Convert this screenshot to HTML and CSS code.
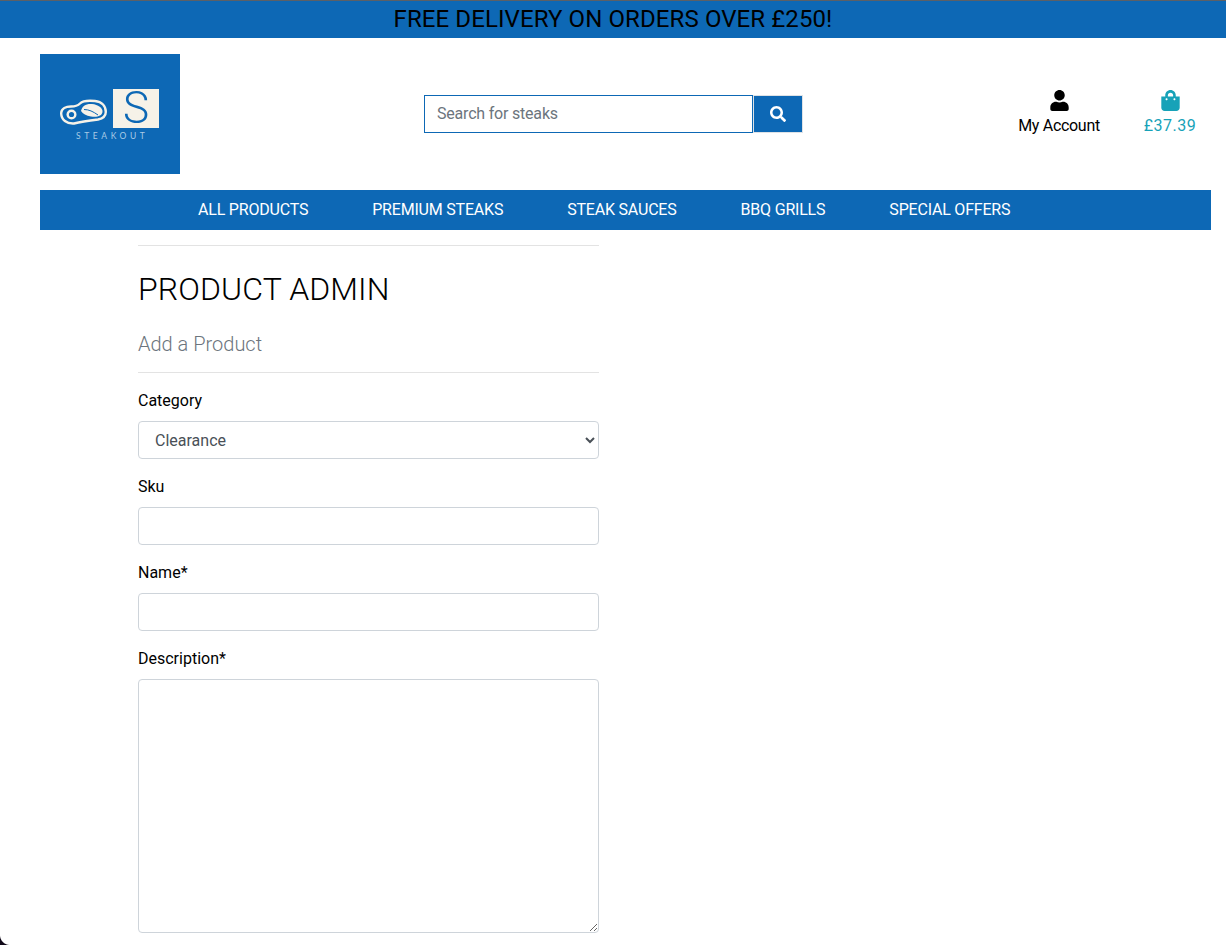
FILE: index.html
```html
<!DOCTYPE html>
<html lang="en">
<head>
    <meta charset="UTF-8">
    <meta name="viewport" content="width=device-width, initial-scale=1.0">
    <title>Steakout - Product Admin</title>
    <link rel="stylesheet" href="styles.css">
</head>
<body>

<div class="banner">FREE DELIVERY ON ORDERS OVER £250!</div>

<header class="top">
    <a class="logo" href="#">
        <span class="logo-row">
            <svg class="logo-meat" viewBox="0 0 47 26" aria-hidden="true">
                <path d="M1.2 14C1.5 9.5 6 7.5 11 7.5C15 7.5 18 6.5 20 4.5C23 1.5 27 1.2 35 2C42 2.7 45.8 7 45.8 13C45.8 17.5 43 19.5 38 20.5C30 21.5 22 22.5 14 24.5C7 25 1 21 1.2 14Z" fill="#0d68b5" stroke="#f6f2e8" stroke-width="2.4"/>
                <path d="M21 12C22 7 26 4.5 32 5C38 5.5 43 9 42.5 13C42 17 37 18.5 31 17.5C26 16.5 23 15 21 12Z" fill="#f6f2e8"/>
                <path d="M24 10.5C29 10.5 33 12.5 38 16" stroke="#0d68b5" stroke-width="1" fill="none"/>
                <circle cx="11.5" cy="15.5" r="5" fill="#f6f2e8"/>
                <circle cx="11.5" cy="15.5" r="2.6" fill="#0d68b5"/>
            </svg>
            <span class="logo-s">S</span>
        </span>
        <span class="logo-name">STEAKOUT</span>
    </a>

    <form class="search">
        <input class="search-input" type="text" placeholder="Search for steaks">
        <button class="search-btn" type="button">
            <svg viewBox="0 0 512 512" width="16" height="16" aria-hidden="true"><path fill="#fff" d="M505 442.7L405.3 343c-4.5-4.5-10.6-7-17-7H372c27.6-35.3 44-79.7 44-128C416 93.1 322.9 0 208 0S0 93.1 0 208s93.1 208 208 208c48.3 0 92.7-16.4 128-44v16.3c0 6.4 2.5 12.5 7 17l99.7 99.7c9.4 9.4 24.6 9.4 33.9 0l28.3-28.3c9.4-9.4 9.4-24.6.1-34zM208 336c-70.7 0-128-57.2-128-128 0-70.7 57.2-128 128-128 70.7 0 128 57.2 128 128 0 70.7-57.2 128-128 128z"/></svg>
        </button>
    </form>

    <div class="actions">
        <a class="action" href="#">
            <svg viewBox="0 0 448 512" width="19" height="21" aria-hidden="true"><path fill="#000" d="M224 256c70.7 0 128-57.3 128-128S294.7 0 224 0 96 57.3 96 128s57.3 128 128 128zm89.6 32h-16.7c-22.2 10.2-46.9 16-72.9 16s-50.6-5.8-72.9-16h-16.7C60.2 288 0 348.2 0 422.4V464c0 26.5 21.5 48 48 48h352c26.5 0 48-21.5 48-48v-41.6c0-74.2-60.2-134.4-134.4-134.4z"/></svg>
            <span>My Account</span>
        </a>
        <a class="action action-bag" href="#">
            <svg viewBox="0 0 448 512" width="19" height="21" aria-hidden="true"><path fill="#17a2b8" d="M352 160v-32C352 57.42 294.579 0 224 0 153.42 0 96 57.42 96 128v32H0v272c0 44.183 35.817 80 80 80h288c44.183 0 80-35.817 80-80V160h-96zm-192-32c0-35.29 28.71-64 64-64s64 28.71 64 64v32H160v-32zm160 120c-13.255 0-24-10.745-24-24s10.745-24 24-24 24 10.745 24 24-10.745 24-24 24zm-192 0c-13.255 0-24-10.745-24-24s10.745-24 24-24 24 10.745 24 24-10.745 24-24 24z"/></svg>
            <span>£37.39</span>
        </a>
    </div>
</header>

<nav class="menu">
    <a href="#">ALL PRODUCTS</a>
    <a href="#">PREMIUM STEAKS</a>
    <a href="#">STEAK SAUCES</a>
    <a href="#">BBQ GRILLS</a>
    <a href="#">SPECIAL OFFERS</a>
</nav>

<main class="admin">
    <hr class="rule">
    <h1>PRODUCT ADMIN</h1>
    <h2>Add a Product</h2>
    <hr class="rule rule-sub">

    <form>
        <div class="field">
            <label for="category">Category</label>
            <select id="category" class="control">
                <option>Clearance</option>
            </select>
        </div>
        <div class="field">
            <label for="sku">Sku</label>
            <input id="sku" class="control" type="text">
        </div>
        <div class="field">
            <label for="name">Name*</label>
            <input id="name" class="control" type="text">
        </div>
        <div class="field">
            <label for="description">Description*</label>
            <textarea id="description" class="control control-area"></textarea>
        </div>
    </form>
</main>

<div class="corner"></div>

</body>
</html>
```

FILE: styles.css
```css
* {
    box-sizing: border-box;
}

html {
    height: 945px;
    overflow: hidden;
}

body {
    margin: 0;
    height: 945px;
    overflow: hidden;
    position: relative;
    background-color: white;
    color: black;
    font-family: Roboto, "Noto Sans", sans-serif;
    font-size: 16px;
    line-height: 24px;
}

a {
    text-decoration: none;
    color: inherit;
}

.banner {
    height: 38px;
    border-top: 1px solid #5c6066;
    background-color: #0d68b5;
    font-size: 24px;
    line-height: 36px;
    letter-spacing: 0.1px;
    text-align: center;
}

.top {
    display: flex;
    align-items: flex-start;
    height: 152px;
    padding: 16px 0 0 40px;
}

.logo {
    display: flex;
    flex-direction: column;
    width: 140px;
    height: 120px;
    padding: 35px 0 0 20px;
    background-color: #0d68b5;
}

.logo-row {
    display: flex;
    align-items: center;
    gap: 6px;
    filter: blur(0.4px);
}

.logo-meat {
    width: 47px;
    height: 26px;
    margin-top: 6px;
}

.logo-s {
    width: 46px;
    height: 39px;
    background-color: #f6f2e8;
    color: #0d68b5;
    font-weight: 300;
    font-size: 44px;
    line-height: 39px;
    text-align: center;
}

.logo-name {
    margin-top: 4px;
    margin-left: 16px;
    color: #a9cbe6;
    font-family: Lato, sans-serif;
    font-size: 8.5px;
    line-height: 9px;
    letter-spacing: 3.6px;
    white-space: nowrap;
}

.search {
    display: flex;
    width: 379px;
    height: 38px;
    margin-top: 41px;
    margin-left: 244px;
}

.search-input {
    width: 329px;
    height: 38px;
    padding: 0 12px 2px;
    border: 1px solid #0d68b5;
    font-family: inherit;
    font-size: 16px;
    letter-spacing: -0.2px;
    color: #495057;
    outline: none;
}

.search-input::placeholder {
    color: #6c757d;
    opacity: 1;
}

.search-btn {
    display: flex;
    align-items: center;
    justify-content: center;
    width: 50px;
    height: 38px;
    padding: 0;
    border: 1px solid #dee2e6;
    background-color: #0d68b5;
}

.actions {
    display: flex;
    margin-left: 215px;
    margin-top: 36px;
}

.action {
    display: flex;
    flex-direction: column;
    align-items: center;
    width: 82px;
    line-height: 24px;
    white-space: nowrap;
}

.action span {
    margin-top: 3px;
    letter-spacing: -0.3px;
}

.action-bag {
    width: 52px;
    margin-left: 44px;
    color: #17a2b8;
}

.action-bag span {
    letter-spacing: 0.5px;
}

.menu {
    display: flex;
    gap: 64px;
    width: 1171px;
    height: 40px;
    margin-left: 40px;
    padding-left: 158px;
    background-color: #0d68b5;
    color: white;
    line-height: 39px;
    letter-spacing: -0.2px;
}

.admin {
    width: 461px;
    margin-left: 138px;
    padding-top: 15px;
}

.rule {
    height: 1px;
    margin: 0;
    border: 0;
    background-color: #e3e3e3;
}

h1 {
    margin: 23px 0 0;
    font-size: 32px;
    line-height: 40px;
    font-weight: 300;
    letter-spacing: 0.1px;
}

h2 {
    margin: 20px 0 0;
    color: #6c757d;
    font-size: 20px;
    line-height: 30px;
    font-weight: 300;
}

.rule-sub {
    margin-top: 13px;
    margin-bottom: 16px;
}

.field {
    margin-bottom: 16px;
}

label {
    display: block;
    height: 24px;
    margin-bottom: 8px;
}

.control {
    display: block;
    width: 100%;
    height: 38px;
    padding: 6px 12px;
    border: 1px solid #ced4da;
    border-radius: 4px;
    background-color: white;
    color: #495057;
    font-family: inherit;
    font-size: 16px;
}

.control-area {
    height: 254px;
}

.corner {
    position: absolute;
    left: 0;
    bottom: 0;
    width: 10px;
    height: 10px;
    background: radial-gradient(circle at 100% 0, transparent 9.5px, #100818 10.5px);
}
```
